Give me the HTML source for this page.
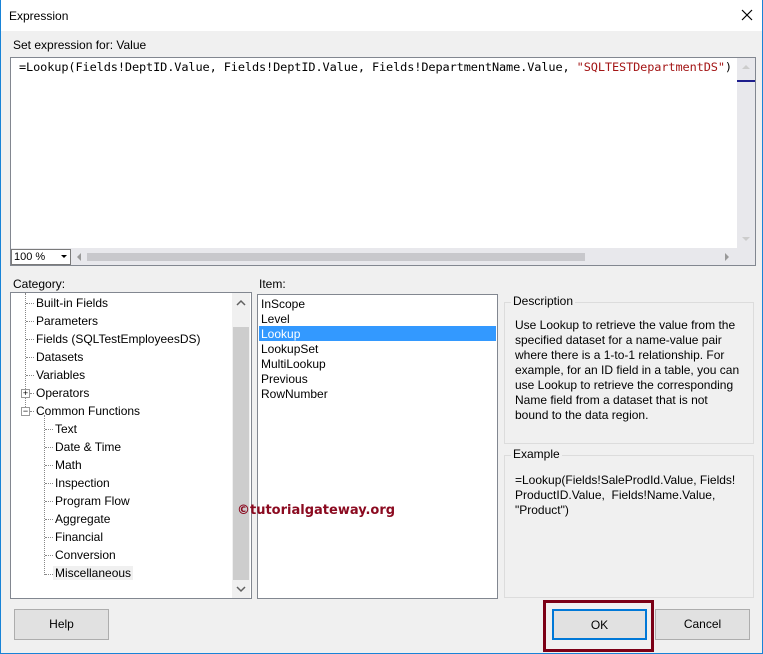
<!DOCTYPE html>
<html><head><style>
*{box-sizing:border-box;margin:0;padding:0}
body{width:763px;height:654px;overflow:hidden;background:#f0f0f0;font-family:"Segoe UI","Liberation Sans",sans-serif;font-size:12px;color:#000;position:relative}
.a{position:absolute}
.win{left:0;top:0;width:763px;height:654px;border:1px solid #1883d7;border-top:none}
.title{left:1px;top:0;width:761px;height:31px;background:#fff}
.box{background:#fff;border:1px solid #828790}
.tree div{position:absolute;white-space:nowrap}
.btn{background:#e1e1e1;border:1px solid #adadad;text-align:center;line-height:29px;font-size:12px}
.gb{border:1px solid #dcdcdc}
.leg{background:#f0f0f0;padding:0 2px}
.dot{border-top:1px dotted #888;height:0}
.vdot{border-left:1px dotted #888;width:0}
</style></head><body>
<div class="a win"></div>
<div class="a title"></div>
<div class="a" style="left:9px;top:9px">Expression</div>
<svg class="a" style="left:741px;top:9px" width="12" height="12"><path d="M1 1L11 11M11 1L1 11" stroke="#000" stroke-width="1.2"/></svg>
<div class="a" style="left:13px;top:38px">Set expression for: Value</div>
<div class="a box" style="left:10px;top:57px;width:746px;height:209px"></div>
<div class="a" style="left:19px;top:59px;width:718px;height:16px;background:#fff;font-family:'DejaVu Sans Mono','Liberation Mono',monospace;font-size:11.9px;line-height:16px;color:#000;white-space:nowrap;letter-spacing:-0.1px">=Lookup(Fields!DeptID.Value, Fields!DeptID.Value, Fields!DepartmentName.Value, <span style="color:#a31515">"SQLTESTDepartmentDS"</span>)</div>
<div class="a" style="left:737px;top:58px;width:18px;height:190px;background:#e8e8ec"></div>
<div class="a" style="left:737px;top:80px;width:18px;height:2px;background:#1e1e8c"></div>
<svg class="a" style="left:740px;top:62px" width="12" height="8"><path d="M2 7L6 3L10 7Z" fill="#ccc"/></svg>
<svg class="a" style="left:740px;top:236px" width="12" height="8"><path d="M2 1L6 5L10 1Z" fill="#ccc"/></svg>
<div class="a" style="left:11px;top:248px;width:744px;height:17px;background:#e8e8ec"></div>
<div class="a" style="left:11px;top:249px;width:60px;height:16px;background:#fff;border:1px solid #7a7a7a;font-size:11px;line-height:14px;padding-left:2px">100 %</div>
<svg class="a" style="left:60px;top:254px" width="8" height="6"><path d="M1 1L4 4L7 1Z" fill="#000"/></svg>
<svg class="a" style="left:75px;top:251px" width="8" height="12"><path d="M6 2L2 6L6 10Z" fill="#999"/></svg>
<div class="a" style="left:87px;top:253px;width:498px;height:8px;background:#c8c8cc"></div>
<svg class="a" style="left:723px;top:251px" width="8" height="12"><path d="M2 2L6 6L2 10Z" fill="#999"/></svg>

<div class="a" style="left:13px;top:277px">Category:</div>
<div class="a box tree" style="left:10px;top:292px;width:242px;height:307px">
<div class="vdot" style="left:14px;top:0;height:116px"></div>
<div class="vdot" style="left:33px;top:122px;height:160px"></div>
<div class="dot" style="left:15px;top:10px;width:8px"></div><div style="left:25px;top:3px">Built-in Fields</div>
<div class="dot" style="left:15px;top:28px;width:8px"></div><div style="left:25px;top:21px">Parameters</div>
<div class="dot" style="left:15px;top:46px;width:8px"></div><div style="left:25px;top:39px">Fields (SQLTestEmployeesDS)</div>
<div class="dot" style="left:15px;top:64px;width:8px"></div><div style="left:25px;top:57px">Datasets</div>
<div class="dot" style="left:15px;top:82px;width:8px"></div><div style="left:25px;top:75px">Variables</div>
<div style="left:10px;top:96px;width:9px;height:9px;border:1px solid #999;background:#fff;font-size:9px;line-height:7px;text-align:center">+</div><div class="dot" style="left:19px;top:100px;width:4px"></div><div style="left:25px;top:93px">Operators</div>
<div style="left:10px;top:114px;width:9px;height:9px;border:1px solid #999;background:#fff;font-size:9px;line-height:6px;text-align:center">−</div><div class="dot" style="left:19px;top:118px;width:4px"></div><div style="left:25px;top:111px">Common Functions</div>
<div class="dot" style="left:34px;top:136px;width:8px"></div><div style="left:44px;top:129px">Text</div>
<div class="dot" style="left:34px;top:154px;width:8px"></div><div style="left:44px;top:147px">Date &amp; Time</div>
<div class="dot" style="left:34px;top:172px;width:8px"></div><div style="left:44px;top:165px">Math</div>
<div class="dot" style="left:34px;top:190px;width:8px"></div><div style="left:44px;top:183px">Inspection</div>
<div class="dot" style="left:34px;top:208px;width:8px"></div><div style="left:44px;top:201px">Program Flow</div>
<div class="dot" style="left:34px;top:226px;width:8px"></div><div style="left:44px;top:219px">Aggregate</div>
<div class="dot" style="left:34px;top:244px;width:8px"></div><div style="left:44px;top:237px">Financial</div>
<div class="dot" style="left:34px;top:262px;width:8px"></div><div style="left:44px;top:255px">Conversion</div>
<div class="dot" style="left:34px;top:281px;width:8px"></div><div style="left:42px;top:273px;background:#f0f0f0;padding:0 2px">Miscellaneous</div>
<div style="left:221px;top:0;width:18px;height:305px;background:#f0f0f0"></div>
<div style="left:222px;top:34px;width:16px;height:253px;background:#cdcdcd"></div>
<svg style="position:absolute;left:224px;top:6px" width="12" height="8"><path d="M2 6L6 2L10 6" stroke="#606060" stroke-width="1.5" fill="none"/></svg>
<svg style="position:absolute;left:224px;top:292px" width="12" height="8"><path d="M2 2L6 6L10 2" stroke="#606060" stroke-width="1.5" fill="none"/></svg>
</div>

<div class="a" style="left:259px;top:277px">Item:</div>
<div class="a box tree" style="left:257px;top:294px;width:241px;height:305px">
<div style="left:3px;top:2px">InScope</div>
<div style="left:3px;top:17px">Level</div>
<div style="left:1px;top:31px;width:237px;height:15px;background:#3399ff;color:#fff;padding-left:2px;line-height:16px">Lookup</div>
<div style="left:3px;top:47px">LookupSet</div>
<div style="left:3px;top:62px">MultiLookup</div>
<div style="left:3px;top:77px">Previous</div>
<div style="left:3px;top:92px">RowNumber</div>
</div>
<div class="a" style="left:237px;top:503px;font-family:'DejaVu Sans',sans-serif;font-weight:bold;font-size:13px;color:#8b0a20">©tutorialgateway.org</div>

<div class="a gb" style="left:504px;top:302px;width:250px;height:142px"></div>
<div class="a leg" style="left:511px;top:294px">Description</div>
<div class="a" style="left:515px;top:318px;width:236px;line-height:15px;white-space:nowrap">Use Lookup to retrieve the value from the<br>specified dataset for a name-value pair<br>where there is a 1-to-1 relationship. For<br>example, for an ID field in a table, you can<br>use Lookup to retrieve the corresponding<br>Name field from a dataset that is not<br>bound to the data region.</div>
<div class="a gb" style="left:504px;top:455px;width:250px;height:143px"></div>
<div class="a leg" style="left:511px;top:447px">Example</div>
<div class="a" style="left:515px;top:473px;width:235px;line-height:15px">=Lookup(Fields!SaleProdId.Value, Fields!<br>ProductID.Value,&nbsp; Fields!Name.Value,<br>"Product")</div>

<div class="a btn" style="left:14px;top:609px;width:95px;height:31px">Help</div>
<div class="a" style="left:543px;top:600px;width:111px;height:52px;border:3px solid #7b0016"></div>
<div class="a btn" style="left:552px;top:609px;width:95px;height:31px;border:2px solid #0078d7;line-height:28px">OK</div>
<div class="a btn" style="left:655px;top:609px;width:95px;height:31px">Cancel</div>
</body></html>
